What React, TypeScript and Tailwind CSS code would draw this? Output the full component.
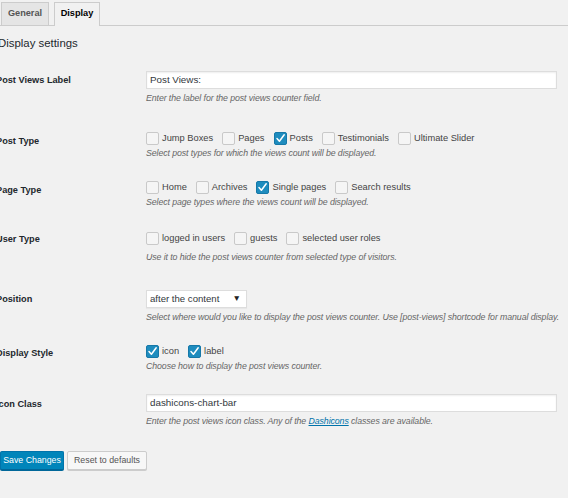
import React from "react";

type CheckProps = { checked?: boolean; label: string };

const Check = ({ checked, label }: CheckProps) => (
  <label className="flex items-center gap-[3px] h-[13px]">
    {checked ? (
      <span className="w-[13px] h-[13px] rounded-[2px] border border-[#1678a8] bg-[#1e8cbe] flex items-center justify-center shrink-0">
        <svg width="11" height="11" viewBox="0 0 11 11">
          <path d="M2 5.6 L4.4 8.2 L9.2 1.8" stroke="#ffffff" strokeWidth="1.5" fill="none" strokeLinecap="round" strokeLinejoin="round" />
        </svg>
      </span>
    ) : (
      <span className="w-[13px] h-[13px] rounded-[2px] border border-[#c9c9c9] bg-[#f5f5f5] shrink-0" />
    )}
    <span className="text-[#444] text-[9.3px] leading-[13px] whitespace-nowrap">{label}</span>
  </label>
);

type RowProps = { h: string; pt: string; label: string; children: React.ReactNode };

const Row = ({ h, pt, label, children }: RowProps) => (
  <div className={`flex ${h}`}>
    <div className={`w-[150px] shrink-0 ${pt} text-[9.2px] leading-[12px] font-bold text-[#23282d] whitespace-nowrap`}>{label}</div>
    <div className="flex flex-col">{children}</div>
  </div>
);

const Desc = ({ mt, children }: { mt: string; children: React.ReactNode }) => (
  <p className={`${mt} text-[8.8px] leading-[12px] tracking-[-0.1px] italic text-[#666] whitespace-nowrap`}>{children}</p>
);

export default function App() {
  return (
    <div className="w-full min-h-[498px] bg-[#f1f1f1] font-['Liberation_Sans',Arial,sans-serif] overflow-hidden">
      <div className="h-[26px] border-b border-[#ccc] flex items-end pl-[1px] gap-[5px]">
        <div className="w-[48px] h-[23px] border border-b-0 border-[#ccc] bg-[#e5e5e5] flex items-center justify-center text-[9.2px] font-bold text-[#555]">
          General
        </div>
        <div className="w-[46px] h-[24px] mb-[-1px] border border-b-0 border-[#ccc] bg-[#f1f1f1] flex items-center justify-center pb-[1px] text-[9.2px] font-bold text-[#000]">
          Display
        </div>
      </div>

      <h2 className="mt-[10px] ml-[-2px] text-[11.4px] leading-[14px] text-[#23282d]">Display settings</h2>

      <div className="mt-[21px] ml-[-4px]">
        <Row h="h-[61px]" pt="pt-[3px]" label="Post Views Label">
          <div className="w-[411px] h-[18px] bg-white border border-[#ddd] shadow-[inset_0_1px_2px_rgba(0,0,0,0.07)] flex items-center px-[3px] text-[9.8px] text-[#32373c]">
            Post Views:
          </div>
          <Desc mt="mt-[3px]">Enter the label for the post views counter field.</Desc>
        </Row>

        <Row h="h-[49px]" pt="pt-[3px]" label="Post Type">
          <div className="flex gap-[9px]">
            <Check label="Jump Boxes" />
            <Check label="Pages" />
            <Check checked label="Posts" />
            <Check label="Testimonials" />
            <Check label="Ultimate Slider" />
          </div>
          <Desc mt="mt-[2px]">Select post types for which the views count will be displayed.</Desc>
        </Row>

        <Row h="h-[50.5px]" pt="pt-[3px]" label="Page Type">
          <div className="flex gap-[9px]">
            <Check label="Home" />
            <Check label="Archives" />
            <Check checked label="Single pages" />
            <Check label="Search results" />
          </div>
          <Desc mt="mt-[2px]">Select page types where the views count will be displayed.</Desc>
        </Row>

        <Row h="h-[58.5px]" pt="pt-[1.5px]" label="User Type">
          <div className="flex gap-[9px]">
            <Check label="logged in users" />
            <Check label="guests" />
            <Check label="selected user roles" />
          </div>
          <Desc mt="mt-[6px]">Use it to hide the post views counter from selected type of visitors.</Desc>
        </Row>

        <Row h="h-[54.5px]" pt="pt-[3px]" label="Position">
          <div className="w-[101px] h-[17.5px] bg-white border border-[#ddd] shadow-[0_1px_1px_rgba(0,0,0,0.04)] flex items-center justify-between pl-[3px] pr-[5px] text-[9.6px] text-[#32373c]">
            <span>after the content</span>
            <span className="text-[8.5px] text-[#222]">▼</span>
          </div>
          <Desc mt="mt-[3px]">
            Select where would you like to display the post views counter. Use [post-views] shortcode for manual display.
          </Desc>
        </Row>

        <Row h="h-[49.5px]" pt="pt-[2.5px]" label="Display Style">
          <div className="flex gap-[9px]">
            <Check checked label="icon" />
            <Check checked label="label" />
          </div>
          <Desc mt="mt-[2px]">Choose how to display the post views counter.</Desc>
        </Row>

        <Row h="h-[57px]" pt="pt-[4px]" label="Icon Class">
          <div className="w-[411px] h-[18px] bg-white border border-[#ddd] shadow-[inset_0_1px_2px_rgba(0,0,0,0.07)] flex items-center px-[3px] text-[9.8px] text-[#32373c]">
            dashicons-chart-bar
          </div>
          <Desc mt="mt-[3px]">
            Enter the post views icon class. Any of the{" "}
            <span className="text-[#0073aa] underline">Dashicons</span> classes are available.
          </Desc>
        </Row>
      </div>

      <div className="flex gap-[3px]">
        <button className="w-[64px] h-[19px] rounded-[2px] bg-[#0085ba] border border-[#0073aa] border-b-[#006799] shadow-[0_1px_0_#006799] text-white text-[8.8px] leading-none">
          Save Changes
        </button>
        <button className="w-[80px] h-[19px] rounded-[2px] bg-[#f7f7f7] border border-[#ccc] shadow-[0_1px_0_#ccc] text-[#555] text-[8.8px] leading-none">
          Reset to defaults
        </button>
      </div>
    </div>
  );
}
